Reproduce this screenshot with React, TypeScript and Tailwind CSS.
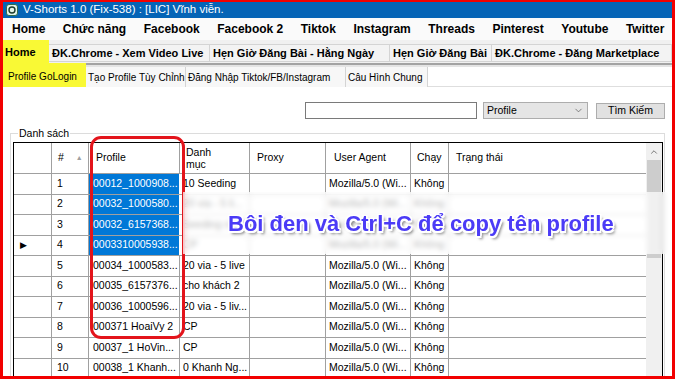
import { ChevronDown, ChevronUp } from "lucide-react";

type Row = {
  n: string;
  profile: string;
  cat: string;
  ua: string;
  run: string;
  selected?: boolean;
  current?: boolean;
};

const menu = [
  "Home",
  "Chức năng",
  "Facebook",
  "Facebook 2",
  "Tiktok",
  "Instagram",
  "Threads",
  "Pinterest",
  "Youtube",
  "Twitter",
];

const tabs1 = [
  { title: "ĐK.Chrome - Xem Video Live", w: "w-[161px]" },
  { title: "Hẹn Giờ Đăng Bài - Hằng Ngày", w: "w-[180px]" },
  { title: "Hẹn Giờ Đăng Bài", w: "w-[102px]" },
  { title: "ĐK.Chrome - Đăng Marketplace", w: "w-[180px]" },
];

const tabs2 = [
  { title: "Tạo Profile Tùy Chỉnh", w: "w-[100px]" },
  { title: "Đăng Nhập Tiktok/FB/Instagram", w: "w-[160px]" },
  { title: "Câu Hình Chung", w: "w-[82px]" },
];

const rows: Row[] = [
  { n: "1", profile: "00012_1000908...", cat: "10 Seeding", ua: "Mozilla/5.0 (Wi...", run: "Không", selected: true },
  { n: "2", profile: "00032_1000580...", cat: "20 via - 5 li...", ua: "Mozilla/5.0 (Wi...", run: "Không", selected: true },
  { n: "3", profile: "00032_6157368...", cat: "Seeding nhóm", ua: "Mozilla/5.0 (Wi...", run: "Không", selected: true },
  { n: "4", profile: "0003310005938...", cat: "CP", ua: "Mozilla/5.0 (Wi...", run: "Không", selected: true, current: true },
  { n: "5", profile: "00034_1000583...", cat: "20 via - 5 live", ua: "Mozilla/5.0 (Wi...", run: "Không" },
  { n: "6", profile: "00035_6157376...", cat: "cho khách 2", ua: "Mozilla/5.0 (Wi...", run: "Không" },
  { n: "7", profile: "00036_1000596...", cat: "20 via - 5 liv...", ua: "Mozilla/5.0 (Wi...", run: "Không" },
  { n: "8", profile: "000371 HoaiVy 2", cat: "CP", ua: "Mozilla/5.0 (Wi...", run: "Không" },
  { n: "9", profile: "00037_1 HoVin...", cat: "CP", ua: "Mozilla/5.0 (Wi...", run: "Không" },
  { n: "10", profile: "00038_1 Khanh...", cat: "0 Khanh Ng...", ua: "Mozilla/5.0 (Wi...", run: "Không" },
];

const AppIcon = () => (
  <svg width="12" height="12" viewBox="0 0 12 12">
    <rect x="0.5" y="0.5" width="11" height="11" rx="2.5" fill="#e4f5ea" stroke="#2f6d4e" />
    <circle cx="6" cy="6" r="3" fill="none" stroke="#1d3d2e" strokeWidth="1.4" />
  </svg>
);

const cell = "h-full flex items-center border-r border-[#a0a0a0] overflow-hidden whitespace-nowrap";

export default function App() {
  return (
    <div className="relative w-[675px] h-[379px] overflow-hidden flex flex-col border-x-[3px] border-b-[3px] border-t-2 border-[#f20000] bg-white font-['Liberation_Sans',Arial,sans-serif] text-black">
      {/* title bar */}
      <div className="h-[16px] shrink-0 bg-[#0564b6] flex items-center gap-[5px] pl-[3px] text-white text-[11.5px]">
        <AppIcon />
        <span>V-Shorts 1.0 (Fix-538) : [LIC] Vĩnh viễn.</span>
      </div>

      {/* menu */}
      <div className="h-[22px] shrink-0 bg-[#fafafa] flex items-center gap-[17.5px] pl-[9px] text-[12px] font-bold">
        {menu.map((m) => (
          <span key={m} className="whitespace-nowrap">
            {m}
          </span>
        ))}
      </div>

      {/* tab strip 1 */}
      <div className="h-[23px] shrink-0 bg-[#f0f0f0] flex items-end text-[11px] font-bold">
        <div className="h-[23px] w-[46px] bg-[#f9f935] flex items-center pl-[2px] pt-[2px]">Home</div>
        {tabs1.map((t) => (
          <div
            key={t.title}
            className={`${t.w} h-[18px] mb-[1px] flex items-center pl-[3px] border border-l-0 border-[#d4d4d4] bg-[#f3f3f3] whitespace-nowrap`}
          >
            {t.title}
          </div>
        ))}
      </div>

      {/* tab strip 2 */}
      <div className="h-[24px] shrink-0 flex text-[10px]">
        <div className="w-[83px] h-[24px] bg-[#f9f935] flex items-center pl-[5px] pt-[2px]">Profile GoLogin</div>
        <div className="flex-1 flex flex-col">
          <div className="h-[4px] border-t-2 border-[#a3a3a3] bg-[#e4e4e4]" />
          <div className="h-[20px] flex bg-white border-b border-[#dedede]">
            {tabs2.map((t) => (
              <div
                key={t.title}
                className={`${t.w} h-[20px] flex items-center pl-[2px] border-r border-[#d4d4d4] bg-[#f7f7f7] whitespace-nowrap`}
              >
                {t.title}
              </div>
            ))}
          </div>
        </div>
      </div>

      {/* content */}
      <div className="flex-1 flex flex-col px-[7px] text-[10px]">
        <div className="flex justify-end items-center gap-[6px] pt-[15px]">
          <div className="w-[172px] h-[17px] border border-[#7a7a7a] bg-white" />
          <div className="w-[105px] h-[17px] border border-[#adadad] bg-[#e5e5e5] flex items-center justify-between px-[3px] text-[10.5px]">
            <span>Profile</span>
            <ChevronDown size={11} strokeWidth={1.5} className="text-[#555]" />
          </div>
          <div className="ml-[2px] w-[69px] h-[16px] border border-[#adadad] bg-[#e1e1e1] flex items-center justify-center text-[10.5px]">
            Tìm Kiếm
          </div>
        </div>

        {/* group box */}
        <div className="relative mt-[14px] flex-1 border border-b-0 border-[#dcdcdc] pl-[2px] pt-[8px]">
          <span className="absolute -top-[7px] left-[7px] bg-white px-[1px] text-[10.5px] leading-[12px]">Danh sách</span>

          <div className="w-[650px] h-full border border-b-0 border-black flex">
            <div className="w-[632px] flex flex-col">
              {/* header */}
              <div className="h-[31px] shrink-0 flex border-b border-[#a0a0a0] text-[10.5px]">
                <div className={`${cell} w-[38px]`} />
                <div className={`${cell} w-[37px] pl-[6px] gap-[12px]`}>
                  <span>#</span>
                  <span className="text-[#a0a0a0] text-[7px]">▲</span>
                </div>
                <div className={`${cell} w-[91px] pl-[7px]`}>Profile</div>
                <div className={`${cell} w-[70px] pl-[6px] flex-col !items-start justify-center leading-[12px]`}>
                  <span>Danh</span>
                  <span>mục</span>
                </div>
                <div className={`${cell} w-[76px] pl-[7px]`}>Proxy</div>
                <div className={`${cell} w-[85px] pl-[8px]`}>User Agent</div>
                <div className={`${cell} w-[38px] pl-[6px]`}>Chạy</div>
                <div className={`${cell} w-[197px] pl-[7px] border-r-0`}>Trạng thái</div>
              </div>

              {/* rows */}
              {rows.map((r) => (
                <div key={r.n} className="h-[20.5px] shrink-0 flex border-b border-[#a0a0a0] text-[10.5px]">
                  <div className={`${cell} w-[38px] pl-[6px]`}>
                    {r.current && <span className="text-[9px]">▶</span>}
                  </div>
                  <div className={`${cell} w-[37px] pl-[5px]`}>{r.n}</div>
                  <div
                    className={`${cell} w-[91px] pl-[4px] ${r.selected ? "bg-[#0078d7] text-white border-white" : ""}`}
                  >
                    {r.profile}
                  </div>
                  <div className={`${cell} w-[70px] pl-[3px]`}>{r.cat}</div>
                  <div className={`${cell} w-[76px]`} />
                  <div className={`${cell} w-[85px] pl-[3px]`}>{r.ua}</div>
                  <div className={`${cell} w-[38px] pl-[3px]`}>{r.run}</div>
                  <div className={`${cell} w-[197px] border-r-0`} />
                </div>
              ))}
            </div>

            {/* scrollbar */}
            <div className="w-[17px] flex flex-col bg-[#f0f0f0]">
              <div className="h-[17px] flex items-center justify-center">
                <ChevronUp size={10} strokeWidth={2} className="text-[#606060]" />
              </div>
              <div className="mx-[1px] h-[98px] bg-[#cdcdcd]" />
            </div>
          </div>
        </div>
      </div>

      {/* red highlight around Profile column */}
      <div className="absolute left-[87px] top-[134px] w-[95px] h-[203px] border-[3px] border-[#e3141b] rounded-[11px]" />

      {/* blurred caption strip */}
      <div className="absolute left-[180px] top-[190px] w-[487px] h-[62px] bg-white/70 backdrop-blur-[2.5px] flex items-center pl-[45px]">
        <span className="text-[22px] font-bold text-[#4b3bf6] whitespace-nowrap [text-shadow:1.5px_1.5px_0_#fff,-1.5px_-1.5px_0_#fff,1.5px_-1.5px_0_#fff,-1.5px_1.5px_0_#fff,0_1.5px_0_#fff,1.5px_0_0_#fff,2.5px_2.5px_3px_rgba(0,0,0,0.55)]">
          Bôi đen và Ctrl+C để copy tên profile
        </span>
      </div>
    </div>
  );
}
